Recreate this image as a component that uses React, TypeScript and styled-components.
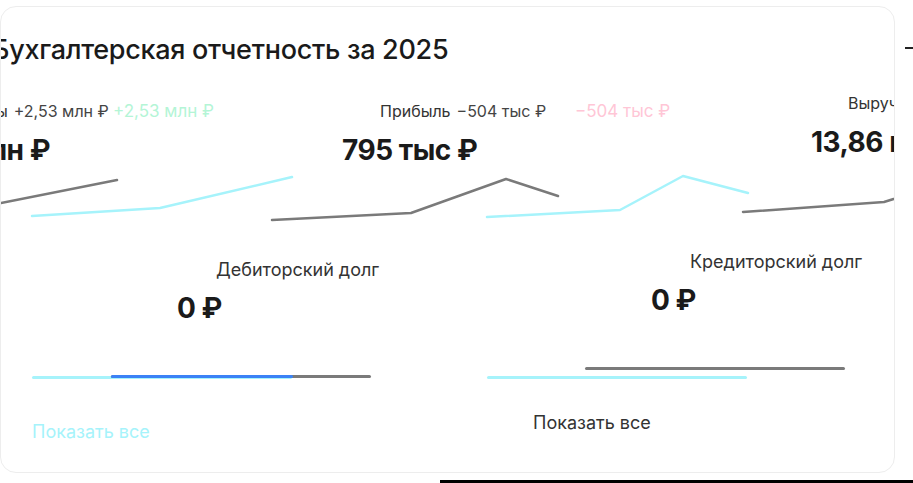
import React from 'react';
import styled, { createGlobalStyle } from 'styled-components';

const GlobalStyle = createGlobalStyle`
  html, body {
    margin: 0;
    padding: 0;
    background: #fff;
  }
  body {
    font-family: Inter, 'Noto Sans', sans-serif;
    color: #1f1f1f;
  }
`;

const Page = styled.div`
  position: relative;
  width: 913px;
  height: 483px;
  overflow: hidden;
  background: #fff;
`;

const Card = styled.div`
  position: relative;
  z-index: 1;
  box-sizing: border-box;
  margin: 6px 18px 0 0;
  height: 467px;
  border: 1px solid #ededed;
  border-radius: 16px;
  overflow: hidden;
`;

const Title = styled.h2`
  margin: 0;
  padding: 27px 0 0 0;
  margin-left: -9px;
  font-size: 27px;
  line-height: 32px;
  font-weight: 500;
  letter-spacing: -0.3px;
  white-space: nowrap;
  color: #1a1a1a;
`;

const Row = styled.div<{ $start: number; $gap: number; $top: number }>`
  display: flex;
  gap: ${(p) => p.$gap}px;
  margin-left: ${(p) => p.$start}px;
  margin-top: ${(p) => p.$top}px;
`;

const Column = styled.div<{ $width: number; $lift?: number }>`
  flex: 0 0 ${(p) => p.$width}px;
  min-width: 0;
  display: flex;
  flex-direction: column;
  margin-top: ${(p) => -(p.$lift ?? 0)}px;
`;

const LabelLine = styled.div<{ $indent: number }>`
  display: flex;
  align-items: baseline;
  gap: 6px;
  padding-left: ${(p) => p.$indent}px;
  height: 22px;
  line-height: 22px;
  font-size: 16px;
  color: #333;
  white-space: nowrap;
`;

const Delta = styled.span<{ $tone?: string }>`
  font-size: ${(p) => (p.$tone ? 17 : 16)}px;
  color: ${(p) => p.$tone ?? '#444'};
  margin-left: ${(p) => (p.$tone ? 6 : 0)}px;
`;

const Value = styled.div<{ $indent: number; $top: number }>`
  padding-left: ${(p) => p.$indent}px;
  margin-top: ${(p) => p.$top}px;
  font-size: 28px;
  line-height: 32px;
  font-weight: 700;
  letter-spacing: -0.5px;
  white-space: nowrap;
  color: #1a1a1a;
`;

const Spark = styled.svg<{ $top: number }>`
  display: block;
  flex: none;
  overflow: visible;
  margin-top: ${(p) => p.$top}px;
`;

const DebtLabel = styled.div<{ $indent: number }>`
  padding-left: ${(p) => p.$indent}px;
  font-size: 18px;
  line-height: 24px;
  color: #333;
  white-space: nowrap;
`;

const Track = styled.div<{ $tone: string; $top: number }>`
  width: 260px;
  height: 3px;
  background: ${(p) => p.$tone};
  margin-top: ${(p) => p.$top}px;
  border-radius: 2px;
`;

const Fill = styled.div<{ $tone: string }>`
  height: 3px;
  background: ${(p) => p.$tone};
  border-radius: 2px;
`;

const ShowAll = styled.a<{ $tone: string; $shift: number }>`
  display: block;
  margin-left: ${(p) => p.$shift}px;
  margin-top: 41px;
  font-size: 18px;
  line-height: 24px;
  color: ${(p) => p.$tone};
  text-decoration: none;
  white-space: nowrap;
`;

const Ghost = styled.div`
  position: absolute;
  inset: 0;
  z-index: 0;
  pointer-events: none;
`;

const GhostSpacer = styled.div<{ $h: number }>`
  height: ${(p) => p.$h}px;
`;

const EdgeDash = styled.div`
  position: absolute;
  z-index: 2;
  top: 47px;
  right: 0;
  width: 8px;
  height: 2px;
  background: #222;
`;

const BottomStrip = styled.div`
  position: absolute;
  z-index: 2;
  left: 440px;
  right: 0;
  bottom: 0;
  height: 3px;
  background: #000;
`;

type Pt = [number, number];

const Line = ({ pts, tone, top }: { pts: Pt[]; tone: string; top: number }) => (
  <Spark width={290} height={50} $top={top}>
    <polyline
      points={pts.map((p) => p.join(',')).join(' ')}
      fill="none"
      stroke={tone}
      strokeWidth={2.5}
      strokeLinejoin="round"
      strokeLinecap="round"
    />
  </Spark>
);

const GRAY = '#7a7a7a';
const CYAN = '#a6f3fb';

const metrics = [
  {
    label: 'Чистые активы',
    delta: '+2,53 млн ₽',
    value: '10,29 млн ₽',
    pts: [[150, 32], [200, 28], [316, 5]] as Pt[],
    lift: 0,
    indent: 88,
    valueIndent: 88,
  },
  {
    label: 'Прибыль',
    delta: '−504 тыс ₽',
    value: '795 тыс ₽',
    pts: [[0, 45], [139, 38], [234, 4], [286, 21]] as Pt[],
    lift: 0,
    indent: 108,
    valueIndent: 70,
  },
  {
    label: 'Выручка',
    delta: '+4,1 млн ₽',
    value: '13,86 млн ₽',
    pts: [[0, 45], [141, 35], [170, 26]] as Pt[],
    lift: 8,
    indent: 105,
    valueIndent: 68,
  },
];

const debts = [
  { label: 'Дебиторский долг', value: '0 ₽', fill: 70, lift: 0, link: false },
  { label: 'Кредиторский долг', value: '0 ₽', fill: 0, lift: 8, link: true },
];

const ghostCharts: Pt[][] = [
  [[0, 44], [128, 36], [260, 5]],
  [[0, 45], [133, 38], [196, 4], [261, 21]],
];

const App = () => (
  <>
    <GlobalStyle />
    <Page>
      <Ghost>
        <GhostSpacer $h={100} />
        <Row $start={32} $gap={195} $top={0}>
          {ghostCharts.map((pts, i) => (
            <Column key={i} $width={260}>
              <LabelLine $indent={i === 0 ? 75 : 82}>
                <Delta $tone={i === 0 ? '#b4f5d6' : '#ffc6d6'}>
                  {i === 0 ? '+2,53 млн ₽' : '−504 тыс ₽'}
                </Delta>
              </LabelLine>
              <Line pts={pts} tone={CYAN} top={50} />
            </Column>
          ))}
        </Row>
        <Row $start={32} $gap={195} $top={154}>
          {[0, 1].map((i) => (
            <Column key={i} $width={260}>
              <Track $tone={CYAN} $top={0} />
              {i === 0 && (
                <ShowAll $tone={CYAN} $shift={0} href="#">
                  Показать все
                </ShowAll>
              )}
            </Column>
          ))}
        </Row>
      </Ghost>
      <Card>
        <Title>Бухгалтерская отчетность за 2025</Title>
        <Row $start={-200} $gap={0} $top={34}>
          {metrics.map((m) => (
            <Column key={m.label} $width={471} $lift={m.lift}>
              <LabelLine $indent={m.indent}>
                {m.label} <Delta>{m.delta}</Delta>
              </LabelLine>
              <Value $indent={m.valueIndent} $top={12}>
                {m.value}
              </Value>
              <Line pts={m.pts} tone={GRAY} top={9} />
            </Column>
          ))}
        </Row>
        <Row $start={110} $gap={214} $top={33}>
          {debts.map((d) => (
            <Column key={d.label} $width={260} $lift={d.lift}>
              <DebtLabel $indent={105}>{d.label}</DebtLabel>
              <Value $indent={66} $top={10}>
                {d.value}
              </Value>
              <Track $tone={GRAY} $top={51}>
                {d.fill > 0 && <Fill $tone="#3b82f6" style={{ width: `${d.fill}%` }} />}
              </Track>
              {d.link && (
                <ShowAll $tone="#333" $shift={-52} href="#">
                  Показать все
                </ShowAll>
              )}
            </Column>
          ))}
        </Row>
      </Card>
      <EdgeDash />
      <BottomStrip />
    </Page>
  </>
);

export default App;
